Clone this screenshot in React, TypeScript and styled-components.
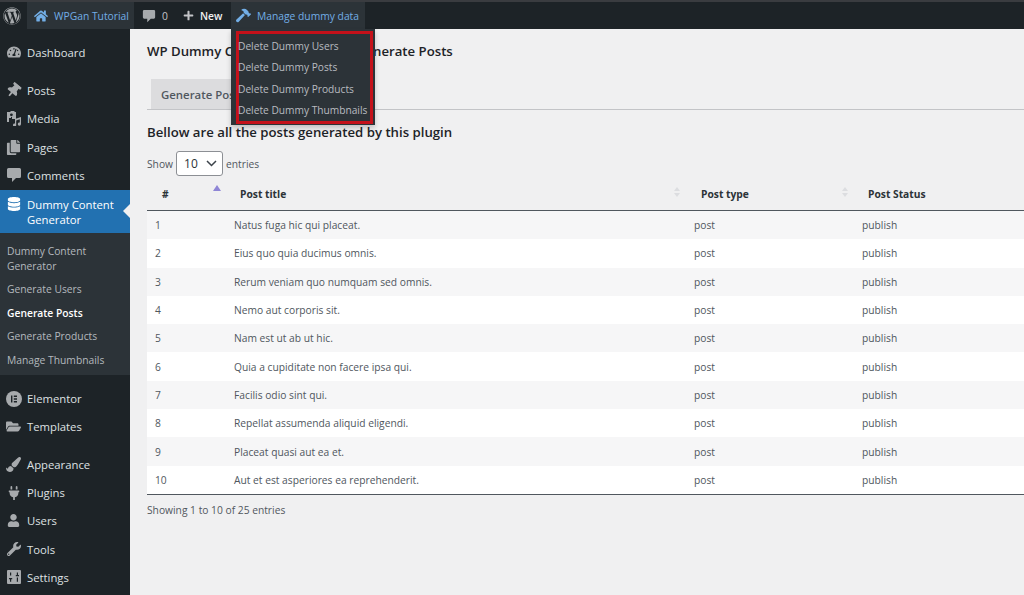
import React from "react";
import styled, { createGlobalStyle } from "styled-components";
import {
  FaWordpress, FaHome, FaPlus, FaHammer, FaTachometerAlt, FaThumbtack, FaCopy,
  FaDatabase, FaFolderOpen, FaPaintBrush, FaPlug, FaUser, FaWrench,
} from "react-icons/fa";

const Global = createGlobalStyle`
  html, body { margin: 0; padding: 0; background: #f0f0f1; height: 100%; overflow: hidden; }
  body { font-family: "Open Sans", "Noto Sans", sans-serif; }
`;

const Page = styled.div`
  width: 1024px; height: 595px; display: flex; flex-direction: column; overflow: hidden; position: relative;
`;
const AdminBar = styled.header`
  height: 29px; flex: none; background: #1d2327; border-top: 2px solid #3a3c40; box-sizing: border-box;
  display: flex; align-items: stretch; color: #c3c4c7; font-size: 10.3px;
`;
const BarItem = styled.div<{ $w: number; $hover?: boolean; $pad?: number }>`
  position: relative; width: ${p => p.$w}px; box-sizing: border-box; padding-left: ${p => p.$pad ?? 7}px;
  display: flex; align-items: center; gap: 6px; white-space: nowrap;
  background: ${p => (p.$hover ? "#2c3338" : "transparent")};
  color: ${p => (p.$hover ? "#72aee6" : "#c3c4c7")};
`;
const BarIconBox = styled.span<{ $c?: string }>`
  display: inline-flex; color: ${p => p.$c ?? "#a7aaad"};
`;
const NewLabel = styled.span` color: #f0f0f1; font-weight: 600; `;
const Flyout = styled.div`
  position: absolute; left: 0; top: 27px; width: 144px; height: 96px; box-sizing: border-box; z-index: 5;
  background: #2c3338; box-shadow: 0 3px 5px rgba(0,0,0,.2); padding: 2px 2px 1px 5px;
`;
const FlyoutInner = styled.div`
  height: 100%; box-sizing: border-box; border: 3px solid #c4111a; display: flex; flex-direction: column;
  padding: 2px 0 0; justify-content: space-between;
`;
const FlyoutLink = styled.a`
  color: #b9bcc0; font-size: 10.2px; line-height: 21px; white-space: nowrap; margin-left: -1px;
`;
const Body = styled.div` flex: 1; display: flex; min-height: 0; `;
const Side = styled.nav`
  width: 130px; flex: none; background: #1d2327; color: #f0f0f1; font-size: 11.3px; padding-top: 9px; box-sizing: border-box;
`;
const MenuItem = styled.div<{ $gap?: number }>`
  height: 28.3px; display: flex; align-items: center; margin-top: ${p => p.$gap ?? 0}px; color: #dfe1e3;
`;
const IconSlot = styled.span`
  width: 27px; flex: none; display: flex; justify-content: center; color: #a7aaad;
`;
const ActiveItem = styled.div`
  position: relative; background: #2271b1; color: #fff; height: 43px; margin-top: 1px; display: flex; align-items: flex-start;
  padding-top: 7px; box-sizing: border-box; line-height: 15px; font-size: 11.3px;
  &::after {
    content: ""; position: absolute; right: 0; top: 14px; border: 7px solid transparent; border-right-color: #f0f0f1;
  }
`;
const ActiveIcon = styled(IconSlot)` color: #fff; `;
const SubMenu = styled.div`
  background: #2c3338; height: 142px; padding: 11px 0 0 7px; box-sizing: border-box; font-size: 10.3px; color: #b4b9be;
  display: flex; flex-direction: column;
`;
const SubLink = styled.div<{ $cur?: boolean; $h?: number }>`
  line-height: 15px; min-height: ${p => p.$h ?? 23.5}px; color: ${p => (p.$cur ? "#fff" : "#b4b9be")};
  font-weight: ${p => (p.$cur ? 600 : 400)};
`;
const Main = styled.main`
  flex: 1; min-width: 0; padding: 12px 0 0 17px; box-sizing: border-box; color: #3c434a; font-size: 10.25px;
`;
const Title = styled.h1`
  margin: 0; font-size: 13.2px; line-height: 20px; font-weight: 600; color: #1d2327; white-space: nowrap;
`;
const Tabs = styled.div`
  margin-top: 18px; height: 31px; border-bottom: 1px solid #c3c4c7; display: flex; box-sizing: border-box;
`;
const Tab = styled.div`
  margin-left: 4px; padding: 0 10px; width: 140px; box-sizing: border-box; height: 30px; background: #dcdcde;
  color: #50575e; font-size: 11.4px; font-weight: 600; line-height: 31px; white-space: nowrap;
`;
const Sub = styled.h2`
  margin: 12px 0 0; font-size: 13.2px; line-height: 20px; font-weight: 600; color: #1d2327;
`;
const LengthRow = styled.div`
  margin-top: 9px; display: flex; align-items: center; gap: 3px; height: 25px; color: #50575e; font-size: 10.25px;
`;
const FakeSelect = styled.div`
  width: 47px; height: 25px; box-sizing: border-box; border: 1px solid #8c8f94; border-radius: 3px; background: #fff;
  display: flex; align-items: center; justify-content: space-between; padding: 0 5px 0 7px; font-size: 12px; color: #2c3338;
`;
const Table = styled.div` margin-top: 3px; `;
const cols = "87px 460px 168px 1fr";
const Head = styled.div`
  display: grid; grid-template-columns: ${cols}; height: 30px; padding-bottom: 1px; border-bottom: 1px solid #50575e;
  font-weight: 700; font-size: 10.25px; color: #2c3338; align-items: center;
`;
const HeadCell = styled.div<{ $pad: number }>`
  position: relative; padding-left: ${p => p.$pad}px; height: 100%; display: flex; align-items: center;
`;
const SortMark = styled.span`
  position: absolute; right: 14px; top: 8px; width: 6px; height: 10px;
  &::before { content: ""; position: absolute; top: 0; left: 0; border: 3px solid transparent; border-bottom: 4px solid #dcdde0; border-top: 0; }
  &::after { content: ""; position: absolute; bottom: 0; left: 0; border: 3px solid transparent; border-top: 4px solid #dcdde0; border-bottom: 0; }
`;
const SortUp = styled.span`
  position: absolute; right: 13px; top: 6px; border: 4px solid transparent; border-bottom: 6px solid #8f86d6; border-top: 0;
`;
const Row = styled.div<{ $odd: boolean }>`
  display: grid; grid-template-columns: ${cols}; height: 28.3px; align-items: center; background: ${p => (p.$odd ? "#f6f6f7" : "#fff")};
  color: #50575e;
`;
const Cell = styled.div<{ $pad?: number }>` padding-left: ${p => p.$pad ?? 0}px; `;
const Rows = styled.div` border-bottom: 1px solid #50575e; `;
const Info = styled.div` margin-top: 8px; color: #50575e; font-size: 10.25px; `;

const Bubble = ({ s }: { s: number }) => (
  <svg width={s} height={s} viewBox="0 0 16 16" fill="currentColor">
    <path d="M2.500 1h11A1.500 1.500 0 0 1 15 2.500v7a1.500 1.500 0 0 1-1.500 1.500H10l-4 4v-4H2.500A1.500 1.500 0 0 1 1 9.500v-7A1.500 1.500 0 0 1 2.500 1z" />
  </svg>
);
const MediaIcon = () => (
  <svg width="16" height="15" viewBox="0 0 16 15" fill="currentColor">
    <path d="M1 1h3l1-1h3l1 1h1v7H6V6H1z" />
    <circle cx="5.400" cy="3.800" r="1.400" fill="#1d2327" />
    <path d="M1 6h4v1H1zM1 6h2v5H1zM9 8l6-2v7a1.600 1.600 0 1 1-1.200-1.500V8.200L10.200 9.400V14a1.600 1.600 0 1 1-1.200-1.500z" />
  </svg>
);
const ElementorIcon = () => (
  <svg width="16" height="16" viewBox="0 0 16 16">
    <circle cx="8" cy="8" r="8" fill="currentColor" />
    <path d="M5 4.500h1.400v7H5zM7.800 4.500H11v1.400H7.800zM7.800 7.300H11v1.400H7.800zM7.800 10.100H11v1.400H7.800z" fill="#1d2327" />
  </svg>
);
const SettingsIcon = () => (
  <svg width="14" height="14" viewBox="0 0 14 14">
    <rect width="14" height="14" rx="1" fill="currentColor" />
    <path d="M3 2.500h1.200v3H3zM2 8h3.200v1.200H4.200v2.500H3V9.200H2zM9.800 2.500H11V5h1v1.200H8.800V5h1zM9.800 7.500H11v4.200H9.800z" fill="#1d2327" />
  </svg>
);
const Chevron = () => (
  <svg width="11" height="7" viewBox="0 0 11 7" fill="none" stroke="#3c434a" strokeWidth="1.5"><path d="M1 1l4.500 4.500L10 1" /></svg>
);

const group1 = [
  { l: "Posts", i: <FaThumbtack size={15} style={{ transform: "rotate(40deg)" }} /> },
  { l: "Media", i: <MediaIcon /> },
  { l: "Pages", i: <FaCopy size={15} /> },
  { l: "Comments", i: <Bubble s={16} /> },
];
const group2 = [
  { l: "Elementor", i: <ElementorIcon /> },
  { l: "Templates", i: <FaFolderOpen size={15} /> },
];
const group3 = [
  { l: "Appearance", i: <FaPaintBrush size={15} /> },
  { l: "Plugins", i: <FaPlug size={14} /> },
  { l: "Users", i: <FaUser size={13} /> },
  { l: "Tools", i: <FaWrench size={14} /> },
  { l: "Settings", i: <SettingsIcon /> },
];
const rows = [
  "Natus fuga hic qui placeat.", "Eius quo quia ducimus omnis.", "Rerum veniam quo numquam sed omnis.",
  "Nemo aut corporis sit.", "Nam est ut ab ut hic.", "Quia a cupiditate non facere ipsa qui.",
  "Facilis odio sint qui.", "Repellat assumenda aliquid eligendi.", "Placeat quasi aut ea et.",
  "Aut et est asperiores ea reprehenderit.",
];

export default function App() {
  return (
    <Page>
      <Global />
      <AdminBar>
        <BarItem $w={27} $pad={3}><BarIconBox><FaWordpress size={18} /></BarIconBox></BarItem>
        <BarItem $w={107} $hover $pad={7}><BarIconBox $c="#72aee6"><FaHome size={14} /></BarIconBox><span>WPGan Tutorial</span></BarItem>
        <BarItem $w={43} $pad={8}><BarIconBox><Bubble s={14} /></BarIconBox><span>0</span></BarItem>
        <BarItem $w={54} $pad={6}><BarIconBox $c="#c3c4c7"><FaPlus size={11} /></BarIconBox><NewLabel>New</NewLabel></BarItem>
        <BarItem $w={134} $hover $pad={5}>
          <BarIconBox $c="#72aee6"><FaHammer size={15} /></BarIconBox><span>Manage dummy data</span>
          <Flyout>
            <FlyoutInner>
              <FlyoutLink>Delete Dummy Users</FlyoutLink>
              <FlyoutLink>Delete Dummy Posts</FlyoutLink>
              <FlyoutLink>Delete Dummy Products</FlyoutLink>
              <FlyoutLink>Delete Dummy Thumbnails</FlyoutLink>
            </FlyoutInner>
          </Flyout>
        </BarItem>
      </AdminBar>
      <Body>
        <Side>
          <MenuItem><IconSlot><FaTachometerAlt size={14} /></IconSlot>Dashboard</MenuItem>
          {group1.map((g, i) => <MenuItem key={g.l} $gap={i === 0 ? 10 : 0}><IconSlot>{g.i}</IconSlot>{g.l}</MenuItem>)}
          <ActiveItem><ActiveIcon><FaDatabase size={14} /></ActiveIcon><span>Dummy Content<br />Generator</span></ActiveItem>
          <SubMenu>
            <SubLink $h={38}>Dummy Content<br />Generator</SubLink>
            <SubLink>Generate Users</SubLink>
            <SubLink $cur>Generate Posts</SubLink>
            <SubLink>Generate Products</SubLink>
            <SubLink>Manage Thumbnails</SubLink>
          </SubMenu>
          {group2.map((g, i) => <MenuItem key={g.l} $gap={i === 0 ? 9 : 0}><IconSlot>{g.i}</IconSlot>{g.l}</MenuItem>)}
          {group3.map((g, i) => <MenuItem key={g.l} $gap={i === 0 ? 9 : 0}><IconSlot>{g.i}</IconSlot>{g.l}</MenuItem>)}
        </Side>
        <Main>
          <Title>WP Dummy Content Generator - Generate Posts</Title>
          <Tabs><Tab>Generate Posts</Tab></Tabs>
          <Sub>Bellow are all the posts generated by this plugin</Sub>
          <LengthRow>Show <FakeSelect>10<Chevron /></FakeSelect> entries</LengthRow>
          <Table>
            <Head>
              <HeadCell $pad={15}>#<SortUp /></HeadCell>
              <HeadCell $pad={6}>Post title<SortMark /></HeadCell>
              <HeadCell $pad={7}>Post type<SortMark /></HeadCell>
              <HeadCell $pad={6}>Post Status</HeadCell>
            </Head>
            <Rows>
              {rows.map((t, i) => (
                <Row key={t} $odd={i % 2 === 0}>
                  <Cell $pad={8}>{i + 1}</Cell><Cell>{t}</Cell><Cell>post</Cell><Cell>publish</Cell>
                </Row>
              ))}
            </Rows>
            <Info>Showing 1 to 10 of 25 entries</Info>
          </Table>
        </Main>
      </Body>
    </Page>
  );
}
